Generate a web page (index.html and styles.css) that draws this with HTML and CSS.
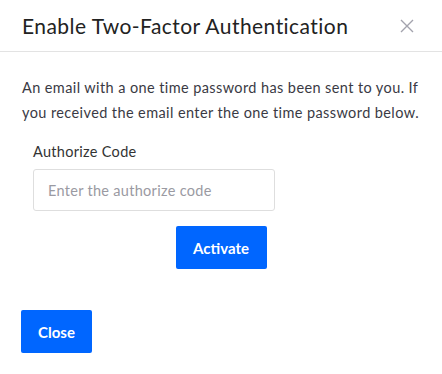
FILE: index.html
```html
<!DOCTYPE html>
<html>
<head>
<meta charset="utf-8">
<link rel="stylesheet" href="styles.css">
</head>
<body>
<div class="modal">
  <div class="header">
    <h1 class="title">Enable Two-Factor Authentication</h1>
    <button class="x" aria-label="Close">
      <svg width="14" height="14" viewBox="0 0 14 14"><path d="M1 1L13 13M13 1L1 13" stroke="#a3a3ad" stroke-width="1.4" fill="none"/></svg>
    </button>
  </div>
  <div class="body">
    <p class="msg">An email with a one time password has been sent to you. If you received the email enter the one time password below.</p>
    <div class="field">
      <label class="label">Authorize Code</label>
      <input class="input" type="text" placeholder="Enter the authorize code">
    </div>
    <div class="actions">
      <button class="btn">Activate</button>
    </div>
  </div>
  <div class="footer">
    <button class="btn close">Close</button>
  </div>
</div>
</body>
</html>
```

FILE: styles.css
```css
html, body {
  margin: 0;
  padding: 0;
  background: #fff;
}
body {
  font-family: Lato, "Open Sans", sans-serif;
  color: #333;
}
.modal {
  width: 442px;
}
.header {
  height: 52px;
  box-sizing: border-box;
  border-bottom: 1px solid #e3e3e3;
  display: flex;
  align-items: center;
  justify-content: space-between;
  padding: 0 28px 0 22px;
}
.title {
  margin: 0;
  font-size: 21px;
  font-weight: 400;
  color: #222;
  letter-spacing: 0.45px;
}
.x {
  border: 0;
  background: none;
  padding: 0;
  display: flex;
}
.body {
  padding: 23px 22px 0 22px;
}
.msg {
  margin: 0;
  font-size: 14.5px;
  line-height: 25px;
  color: #3a3a44;
  letter-spacing: 0.4px;
}
.field {
  margin: 17px 0 0 11px;
  display: flex;
  flex-direction: column;
}
.label {
  font-size: 14.5px;
  line-height: 20px;
  color: #333;
  margin-bottom: 7px;
  letter-spacing: 0.3px;
}
.input {
  width: 242px;
  height: 42px;
  box-sizing: border-box;
  border: 1px solid #dedede;
  border-radius: 3px;
  padding: 0 14px;
  font-family: inherit;
  font-size: 14.5px;
  letter-spacing: 0.3px;
  color: #333;
}
.input::placeholder {
  color: #9a9aa2;
}
.actions {
  display: flex;
  justify-content: center;
  margin-top: 15px;
}
.btn {
  background: #0066ff;
  color: #fff;
  border: 0;
  border-radius: 2px;
  font-family: inherit;
  font-size: 15px;
  font-weight: 700;
  height: 43px;
  width: 91px;
  padding: 0;
  cursor: pointer;
}
.footer {
  padding: 41px 21px 0;
}
.close {
  width: 71px;
}
```
